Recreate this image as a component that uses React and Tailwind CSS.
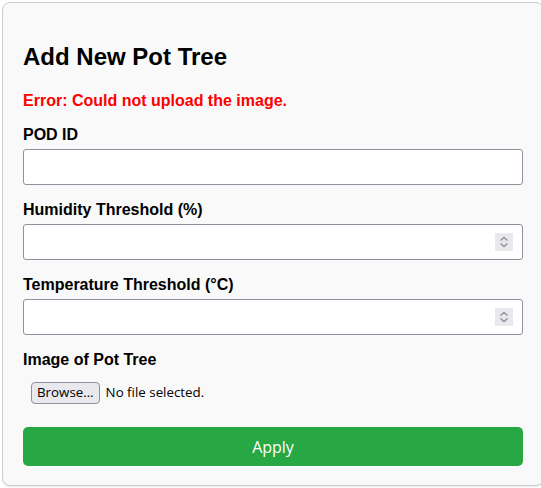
import React from 'react';

const Spinner = () => (
    <div className="absolute right-[9px] top-[8px] w-[18px] h-[18px] bg-[#e9e9ed] flex items-center justify-center">
        <svg width="18" height="18" viewBox="0 0 18 18" fill="none" stroke="#8f8f9d" strokeWidth="1.4">
            <path d="M5.5 7.5 L9 4.5 L12.5 7.5" />
            <path d="M5.5 10.5 L9 13.5 L12.5 10.5" />
        </svg>
    </div>
);

const Field = ({ label, spinner }) => (
    <div className="mb-[15px]">
        <label className="block text-[16px] leading-[19px] font-bold text-black mb-[5px]">{label}</label>
        <div className="relative w-[500px] h-[36px] bg-white border border-[#8f8f9d] rounded-[3px]">
            {spinner && <Spinner />}
        </div>
    </div>
);

const App = () => {
    return (
        <div className="w-[541px] h-[488px] overflow-hidden bg-white font-['Liberation_Sans',Arial,sans-serif]">
            <div className="ml-[2px] mt-[2px] w-[542px] h-[484px] border border-[#cccccc] rounded-[8px] bg-[#f9f9f9] px-5 pt-5 shadow-[0_1px_1px_rgba(0,0,0,0.08)]">
                <h2 className="mt-5 mb-[21px] text-[24px] leading-[28px] font-bold text-black">Add New Pot Tree</h2>
                <p className="text-[16px] leading-[18px] font-bold text-[#ff0000] mb-[15px]">Error: Could not upload the image.</p>

                <Field label="POD ID" />
                <Field label="Humidity Threshold (%)" spinner />
                <Field label="Temperature Threshold (°C)" spinner />

                <div className="mb-[15px]">
                    <label className="block text-[16px] leading-[19px] font-bold text-black mb-[5px]">Image of Pot Tree</label>
                    <div className="flex items-center gap-[6px] p-2 font-['Open_Sans','Noto_Sans',sans-serif] text-[13.33px] text-black">
                        <button className="h-[22px] px-[5px] border border-[#8f8f9d] rounded-[4px] bg-[#e9e9ed] leading-none text-[13.33px]">Browse…</button>
                        <span>No file selected.</span>
                    </div>
                </div>

                <button className="w-[500px] h-[39px] bg-[#28a745] text-white text-[16px] rounded-[5px] font-['Open_Sans','Noto_Sans',sans-serif]">Apply</button>
            </div>
        </div>
    );
};

export default App;
